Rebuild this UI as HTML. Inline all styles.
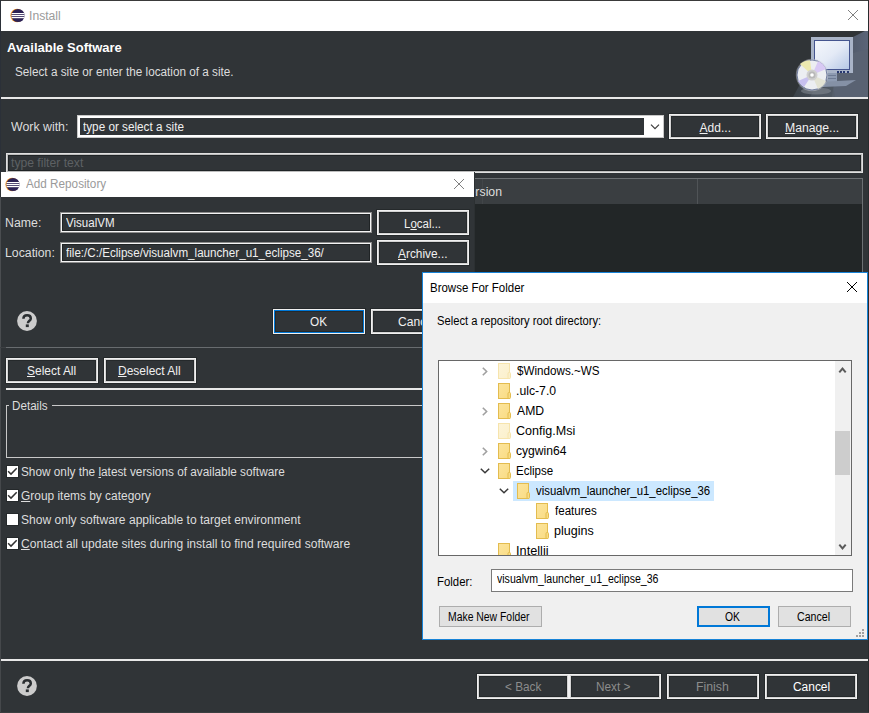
<!DOCTYPE html>
<html><head><meta charset="utf-8">
<style>
*{box-sizing:border-box;margin:0;padding:0}
html,body{width:869px;height:713px;overflow:hidden;background:#303437}
body{position:relative;font-family:"Liberation Sans",sans-serif;font-size:12px;color:#dddddd}
.a{position:absolute}
.t{position:absolute;white-space:nowrap;line-height:14px}
u{text-decoration:underline;text-underline-offset:1px}
</style></head><body>
<div class="a" style="left:0px;top:0px;width:869px;height:713px;background:#303437;"></div>
<div class="a" style="left:0px;top:0px;width:869px;height:1px;background:#3a3a3a;"></div>
<div class="a" style="left:0px;top:0px;width:1px;height:172px;background:#2b3038;"></div>
<div class="a" style="left:0px;top:172px;width:1px;height:541px;background:#45484b;"></div>
<div class="a" style="left:868px;top:0px;width:1px;height:713px;background:#282b2d;"></div>
<div class="a" style="left:0px;top:712px;width:869px;height:1px;background:#3b3e40;"></div>
<div class="a" style="left:1px;top:1px;width:867px;height:30px;background:#ffffff;"></div>
<svg class="a" style="left:10px;top:8px" width="16" height="15" viewBox="0 0 16 15">
  <circle cx="7.1" cy="7.5" r="6.7" fill="#f7941e"/>
  <circle cx="8" cy="7.5" r="6.6" fill="#2c2255"/>
  <g fill="#ffffff"><rect x="1.6" y="5" width="12.8" height="1.2"/><rect x="1.4" y="7" width="13.2" height="1.2"/><rect x="1.6" y="9" width="12.8" height="1.2"/></g>
</svg>
<div class="t" style="left:29.39px;top:9px;font-size:12px;color:#9a9a9a;transform:scaleX(1.0133);transform-origin:0 0">Install</div>
<svg class="a" style="left:848px;top:10px" width="10" height="10" fill="#808080"><rect x="0" y="0" width="1" height="1"/><rect x="9" y="0" width="1" height="1"/><rect x="1" y="1" width="1" height="1"/><rect x="8" y="1" width="1" height="1"/><rect x="2" y="2" width="1" height="1"/><rect x="7" y="2" width="1" height="1"/><rect x="3" y="3" width="1" height="1"/><rect x="6" y="3" width="1" height="1"/><rect x="4" y="4" width="1" height="1"/><rect x="5" y="4" width="1" height="1"/><rect x="5" y="5" width="1" height="1"/><rect x="4" y="5" width="1" height="1"/><rect x="6" y="6" width="1" height="1"/><rect x="3" y="6" width="1" height="1"/><rect x="7" y="7" width="1" height="1"/><rect x="2" y="7" width="1" height="1"/><rect x="8" y="8" width="1" height="1"/><rect x="1" y="8" width="1" height="1"/><rect x="9" y="9" width="1" height="1"/><rect x="0" y="9" width="1" height="1"/></svg>
<div class="t" style="left:7.20px;top:41px;font-size:13px;color:#ffffff;transform:scaleX(0.9974);transform-origin:0 0;font-weight:bold">Available Software</div>
<div class="t" style="left:14.72px;top:65px;font-size:12px;color:#dddddd;transform:scaleX(0.9784);transform-origin:0 0">Select a site or enter the location of a site.</div>
<svg class="a" style="left:790px;top:31px" width="78" height="66" viewBox="0 0 78 66">
<defs>
<linearGradient id="hbg" x1="0" y1="0" x2="1" y2="0"><stop offset="0" stop-color="#3b4249"/><stop offset="0.6" stop-color="#4b5360"/><stop offset="1" stop-color="#5a6478"/></linearGradient>
<linearGradient id="scr" x1="0" y1="0" x2="1" y2="1"><stop offset="0" stop-color="#f4f7fc"/><stop offset="0.5" stop-color="#e4eaf6"/><stop offset="1" stop-color="#b6c8e6"/></linearGradient>
<radialGradient id="dsk" cx="0.5" cy="0.5" r="0.5"><stop offset="0" stop-color="#d8d8d8"/><stop offset="1" stop-color="#f4f4f4"/></radialGradient>
</defs>
<polygon points="3,66 78,66 78,0 75,0 63,6 15,44" fill="url(#hbg)"/>
<polygon points="63,22 78,18 78,66 42,66 45,42 63,42" fill="#596272"/>
<polygon points="20,66 45,66 42,50 28,52" fill="#555d68" opacity="0.6"/>
<rect x="21" y="6" width="42" height="36" fill="#a9b4c8"/>
<rect x="24" y="9" width="36" height="30" fill="#45558f"/>
<rect x="25" y="10" width="34" height="28" fill="url(#scr)"/>
<rect x="47" y="40" width="2" height="2" fill="#283870"/><rect x="50" y="40" width="2" height="2" fill="#283870"/><rect x="53" y="40" width="2" height="2" fill="#283870"/><rect x="57" y="40" width="2" height="2" fill="#283870"/>
<rect x="37" y="42" width="10" height="9" fill="#8e9bb2"/><rect x="38" y="44" width="8" height="1" fill="#6f7c95"/><rect x="38" y="47" width="8" height="1" fill="#6f7c95"/>
<polygon points="30,51 66,49 56,55 32,56" fill="#8591a6"/>
<ellipse cx="26" cy="60" rx="15" ry="3.5" fill="#8a9098" opacity="0.5"/>
<circle cx="22" cy="44" r="16.2" fill="#c9ccd2" opacity="0.45"/><circle cx="22" cy="44" r="15" fill="#eceef2" stroke="#6a779c" stroke-width="0.9"/>
<path d="M22 44 L10 33 A15 15 0 0 1 20 29.2 Z" fill="#ece9b0"/>
<path d="M22 44 L28 30.3 A15 15 0 0 1 36 38 Z" fill="#d8c9f4"/>
<path d="M22 44 L8 50 A15 15 0 0 0 14 56 Z" fill="#c7c0ef"/>
<path d="M22 44 L36 50 A15 15 0 0 1 28 58 Z" fill="#e3e3d4"/>
<circle cx="22" cy="44" r="5.5" fill="#cfcfcf"/>
<circle cx="22" cy="44" r="3.5" fill="#b8b8b8"/>
<circle cx="22" cy="44" r="1.8" fill="#ffffff"/>
</svg>

<div class="a" style="left:1px;top:97px;width:867px;height:2px;background:#e8e8e8;"></div>
<div class="t" style="left:11.10px;top:120px;font-size:12px;color:#dddddd;transform:scaleX(1.0291);transform-origin:0 0">Work with:</div>
<div class="a" style="left:77px;top:115px;width:587px;height:23px;background:#ffffff;"></div>
<div class="a" style="left:77px;top:115px;width:587px;height:1px;background:#c8c8c8;"></div>
<div class="a" style="left:77px;top:137px;width:587px;height:1px;background:#c8c8c8;"></div>
<div class="a" style="left:77px;top:115px;width:1px;height:23px;background:#c8c8c8;"></div>
<div class="a" style="left:663px;top:115px;width:1px;height:23px;background:#c8c8c8;"></div>
<div class="a" style="left:80px;top:118px;width:564px;height:17px;background:#303437;"></div>
<div class="t" style="left:82.60px;top:120px;font-size:12px;color:#f0f0f0;transform:scaleX(0.9767);transform-origin:0 0">type or select a site</div>
<svg class="a" style="left:650px;top:124px" width="10" height="6" viewBox="0 0 10 6"><path d="M1 0.7L5 4.7L9 0.7" stroke="#3c3c3c" stroke-width="1.2" fill="none"/></svg>
<div class="a" style="left:668px;top:113px;width:94px;height:27px;background:#25292b"></div>
<div class="a" style="left:669px;top:114px;width:92px;height:25px;background:#f0f0f0"></div>
<div class="a" style="left:670px;top:115px;width:90px;height:23px;background:#d4d4d4"></div>
<div class="a" style="left:671px;top:116px;width:88px;height:21px;background:#25292b"></div>
<div class="a" style="left:672px;top:117px;width:86px;height:19px;background:#303437"></div>
<div class="t" style="left:699.60px;top:121px;font-size:12px;color:#f0f0f0;transform:scaleX(1.0000);transform-origin:0 0"><u>A</u>dd...</div>
<div class="a" style="left:765px;top:113px;width:94px;height:27px;background:#25292b"></div>
<div class="a" style="left:766px;top:114px;width:92px;height:25px;background:#f0f0f0"></div>
<div class="a" style="left:767px;top:115px;width:90px;height:23px;background:#d4d4d4"></div>
<div class="a" style="left:768px;top:116px;width:88px;height:21px;background:#25292b"></div>
<div class="a" style="left:769px;top:117px;width:86px;height:19px;background:#303437"></div>
<div class="t" style="left:785.08px;top:121px;font-size:12px;color:#f0f0f0;transform:scaleX(1.0157);transform-origin:0 0"><u>M</u>anage...</div>
<div class="a" style="left:6px;top:153px;width:857px;height:20px;background:#e0e0e0;"></div>
<div class="a" style="left:7px;top:154px;width:855px;height:18px;background:#bdbdbd;"></div>
<div class="a" style="left:8px;top:155px;width:853px;height:16px;background:#1f2325;"></div>
<div class="a" style="left:9px;top:156px;width:851px;height:14px;background:#303437;"></div>
<div class="t" style="left:11.00px;top:156px;font-size:12px;color:#5d6164;transform:scaleX(1.0127);transform-origin:0 0">type filter text</div>
<div class="a" style="left:6px;top:178px;width:857px;height:170px;background:#6c7073;"></div>
<div class="a" style="left:7px;top:179px;width:855px;height:25px;background:#3a3e41;"></div>
<div class="a" style="left:7px;top:204px;width:855px;height:143px;background:#222627;"></div>
<div class="a" style="left:697px;top:179px;width:1px;height:25px;background:#505457;"></div>
<div class="a" style="left:482px;top:179px;width:1px;height:25px;background:#424649;"></div>
<div class="t" style="left:461.00px;top:185px;font-size:12px;color:#dddddd;transform:scaleX(1.0256);transform-origin:0 0">Version</div>
<div class="a" style="left:5px;top:357px;width:94px;height:27px;background:#25292b"></div>
<div class="a" style="left:6px;top:358px;width:92px;height:25px;background:#f0f0f0"></div>
<div class="a" style="left:7px;top:359px;width:90px;height:23px;background:#d4d4d4"></div>
<div class="a" style="left:8px;top:360px;width:88px;height:21px;background:#25292b"></div>
<div class="a" style="left:9px;top:361px;width:86px;height:19px;background:#303437"></div>
<div class="t" style="left:27.30px;top:364px;font-size:12px;color:#f0f0f0;transform:scaleX(0.9958);transform-origin:0 0"><u>S</u>elect All</div>
<div class="a" style="left:103px;top:357px;width:94px;height:27px;background:#25292b"></div>
<div class="a" style="left:104px;top:358px;width:92px;height:25px;background:#f0f0f0"></div>
<div class="a" style="left:105px;top:359px;width:90px;height:23px;background:#d4d4d4"></div>
<div class="a" style="left:106px;top:360px;width:88px;height:21px;background:#25292b"></div>
<div class="a" style="left:107px;top:361px;width:86px;height:19px;background:#303437"></div>
<div class="t" style="left:118.10px;top:364px;font-size:12px;color:#f0f0f0;transform:scaleX(0.9984);transform-origin:0 0"><u>D</u>eselect All</div>
<div class="a" style="left:6px;top:388px;width:857px;height:2px;background:#e8e8e8;"></div>
<div class="a" style="left:6px;top:405px;width:3px;height:1px;background:#c8c8c8;"></div>
<div class="a" style="left:52px;top:405px;width:811px;height:1px;background:#c8c8c8;"></div>
<div class="a" style="left:6px;top:405px;width:1px;height:53px;background:#c8c8c8;"></div>
<div class="a" style="left:6px;top:457px;width:857px;height:1px;background:#c8c8c8;"></div>
<div class="a" style="left:862px;top:405px;width:1px;height:53px;background:#c8c8c8;"></div>
<div class="t" style="left:11.63px;top:399px;font-size:12px;color:#dddddd;transform:scaleX(0.9714);transform-origin:0 0">Details</div>
<div class="a" style="left:6px;top:465px;width:13px;height:13px;background:#25292b;"></div>
<div class="a" style="left:7px;top:466px;width:11px;height:11px;background:#ffffff;"></div>
<svg class="a" style="left:7px;top:466px" width="11" height="11" viewBox="0 0 11 11"><path d="M1.1 5.3L4 8.1L9.7 2.3" stroke="#333" stroke-width="1.5" fill="none"/></svg>
<div class="t" style="left:21.42px;top:465px;font-size:12px;color:#dddddd;transform:scaleX(0.9835);transform-origin:0 0">Show only the <u>l</u>atest versions of available software</div>
<div class="a" style="left:6px;top:489px;width:13px;height:13px;background:#25292b;"></div>
<div class="a" style="left:7px;top:490px;width:11px;height:11px;background:#ffffff;"></div>
<svg class="a" style="left:7px;top:490px" width="11" height="11" viewBox="0 0 11 11"><path d="M1.1 5.3L4 8.1L9.7 2.3" stroke="#333" stroke-width="1.5" fill="none"/></svg>
<div class="t" style="left:21.41px;top:489px;font-size:12px;color:#dddddd;transform:scaleX(0.9931);transform-origin:0 0"><u>G</u>roup items by category</div>
<div class="a" style="left:6px;top:513px;width:13px;height:13px;background:#25292b;"></div>
<div class="a" style="left:7px;top:514px;width:11px;height:11px;background:#ffffff;"></div>
<div class="t" style="left:21.39px;top:513px;font-size:12px;color:#dddddd;transform:scaleX(1.0051);transform-origin:0 0">Show only software applicable to target environment</div>
<div class="a" style="left:6px;top:537px;width:13px;height:13px;background:#25292b;"></div>
<div class="a" style="left:7px;top:538px;width:11px;height:11px;background:#ffffff;"></div>
<svg class="a" style="left:7px;top:538px" width="11" height="11" viewBox="0 0 11 11"><path d="M1.1 5.3L4 8.1L9.7 2.3" stroke="#333" stroke-width="1.5" fill="none"/></svg>
<div class="t" style="left:21.39px;top:537px;font-size:12px;color:#dddddd;transform:scaleX(1.0052);transform-origin:0 0"><u>C</u>ontact all update sites during install to find required software</div>
<div class="a" style="left:1px;top:659px;width:867px;height:2px;background:#e8e8e8;"></div>
<svg class="a" style="left:17px;top:676px" width="20" height="20" viewBox="0 0 20 20"><circle cx="10" cy="10" r="9.9" fill="#cccccc"/><path d="M6.4 7.8C6.4 5.3 8.1 4.3 10.1 4.3C12.3 4.3 13.8 5.6 13.8 7.4C13.8 9.7 10.9 9.9 10.9 12.3" stroke="#2a2e31" stroke-width="2.5" fill="none"/><rect x="8.8" y="13.4" width="3" height="2.7" fill="#2a2e31"/></svg>
<div class="a" style="left:476px;top:673px;width:186px;height:27px;background:#25292b;"></div>
<div class="a" style="left:477px;top:674px;width:92px;height:25px;background:#f0f0f0"></div>
<div class="a" style="left:478px;top:675px;width:90px;height:23px;background:#d4d4d4"></div>
<div class="a" style="left:479px;top:676px;width:88px;height:21px;background:#25292b"></div>
<div class="a" style="left:480px;top:677px;width:86px;height:19px;background:#303437"></div>
<div class="t" style="left:504.82px;top:680px;font-size:12px;color:#8c8c8c;transform:scaleX(0.9833);transform-origin:0 0">&lt; Back</div>
<div class="a" style="left:569px;top:674px;width:92px;height:25px;background:#f0f0f0"></div>
<div class="a" style="left:570px;top:675px;width:90px;height:23px;background:#d4d4d4"></div>
<div class="a" style="left:571px;top:676px;width:88px;height:21px;background:#25292b"></div>
<div class="a" style="left:572px;top:677px;width:86px;height:19px;background:#303437"></div>
<div class="t" style="left:596.21px;top:680px;font-size:12px;color:#8c8c8c;transform:scaleX(0.9853);transform-origin:0 0">Next &gt;</div>
<div class="a" style="left:666px;top:673px;width:94px;height:27px;background:#25292b"></div>
<div class="a" style="left:667px;top:674px;width:92px;height:25px;background:#f0f0f0"></div>
<div class="a" style="left:668px;top:675px;width:90px;height:23px;background:#d4d4d4"></div>
<div class="a" style="left:669px;top:676px;width:88px;height:21px;background:#25292b"></div>
<div class="a" style="left:670px;top:677px;width:86px;height:19px;background:#303437"></div>
<div class="t" style="left:696.28px;top:680px;font-size:12px;color:#8c8c8c;transform:scaleX(1.0233);transform-origin:0 0">Finish</div>
<div class="a" style="left:764px;top:673px;width:94px;height:27px;background:#25292b"></div>
<div class="a" style="left:765px;top:674px;width:92px;height:25px;background:#f0f0f0"></div>
<div class="a" style="left:766px;top:675px;width:90px;height:23px;background:#d4d4d4"></div>
<div class="a" style="left:767px;top:676px;width:88px;height:21px;background:#25292b"></div>
<div class="a" style="left:768px;top:677px;width:86px;height:19px;background:#303437"></div>
<div class="t" style="left:792.71px;top:680px;font-size:12px;color:#ffffff;transform:scaleX(0.9944);transform-origin:0 0">Cancel</div>
<div class="a" style="left:0px;top:172px;width:474px;height:176px;background:#303437;"></div>
<div class="a" style="left:0px;top:197px;width:1px;height:151px;background:#4a4d50;"></div>
<div class="a" style="left:474px;top:172px;width:1px;height:176px;background:#2c3032;"></div>
<div class="a" style="left:0px;top:347px;width:6px;height:1px;background:#3d4043;"></div>
<div class="a" style="left:6px;top:347px;width:468px;height:1px;background:#686c6f;"></div>
<div class="a" style="left:1px;top:172px;width:473px;height:25px;background:#ffffff;"></div>
<svg class="a" style="left:5px;top:177px" width="16" height="15" viewBox="0 0 16 15">
  <circle cx="7.1" cy="7.5" r="6.7" fill="#f7941e"/>
  <circle cx="8" cy="7.5" r="6.6" fill="#2c2255"/>
  <g fill="#ffffff"><rect x="1.6" y="5" width="12.8" height="1.2"/><rect x="1.4" y="7" width="13.2" height="1.2"/><rect x="1.6" y="9" width="12.8" height="1.2"/></g>
</svg>
<div class="t" style="left:25.60px;top:177px;font-size:12px;color:#9a9a9a;transform:scaleX(0.9768);transform-origin:0 0">Add Repository</div>
<svg class="a" style="left:454px;top:179px" width="10" height="10" fill="#808080"><rect x="0" y="0" width="1" height="1"/><rect x="9" y="0" width="1" height="1"/><rect x="1" y="1" width="1" height="1"/><rect x="8" y="1" width="1" height="1"/><rect x="2" y="2" width="1" height="1"/><rect x="7" y="2" width="1" height="1"/><rect x="3" y="3" width="1" height="1"/><rect x="6" y="3" width="1" height="1"/><rect x="4" y="4" width="1" height="1"/><rect x="5" y="4" width="1" height="1"/><rect x="5" y="5" width="1" height="1"/><rect x="4" y="5" width="1" height="1"/><rect x="6" y="6" width="1" height="1"/><rect x="3" y="6" width="1" height="1"/><rect x="7" y="7" width="1" height="1"/><rect x="2" y="7" width="1" height="1"/><rect x="8" y="8" width="1" height="1"/><rect x="1" y="8" width="1" height="1"/><rect x="9" y="9" width="1" height="1"/><rect x="0" y="9" width="1" height="1"/></svg>
<div class="t" style="left:5.37px;top:216px;font-size:12px;color:#dddddd;transform:scaleX(1.0273);transform-origin:0 0">Name:</div>
<div class="a" style="left:60px;top:212px;width:312px;height:21px;background:#8c8c8c;"></div>
<div class="a" style="left:61px;top:213px;width:310px;height:19px;background:#f4f4f4;"></div>
<div class="a" style="left:62px;top:214px;width:308px;height:17px;background:#1f2325;"></div>
<div class="a" style="left:63px;top:215px;width:306px;height:15px;background:#303437;"></div>
<div class="t" style="left:66.30px;top:216px;font-size:12px;color:#f0f0f0;transform:scaleX(0.9620);transform-origin:0 0">VisualVM</div>
<div class="a" style="left:376px;top:209px;width:94px;height:27px;background:#25292b"></div>
<div class="a" style="left:377px;top:210px;width:92px;height:25px;background:#f0f0f0"></div>
<div class="a" style="left:378px;top:211px;width:90px;height:23px;background:#d4d4d4"></div>
<div class="a" style="left:379px;top:212px;width:88px;height:21px;background:#25292b"></div>
<div class="a" style="left:380px;top:213px;width:86px;height:19px;background:#303437"></div>
<div class="t" style="left:403.64px;top:217px;font-size:12px;color:#f0f0f0;transform:scaleX(0.9568);transform-origin:0 0">L<u>o</u>cal...</div>
<div class="t" style="left:5.38px;top:246px;font-size:12px;color:#dddddd;transform:scaleX(1.0234);transform-origin:0 0">Location:</div>
<div class="a" style="left:60px;top:242px;width:312px;height:21px;background:#8c8c8c;"></div>
<div class="a" style="left:61px;top:243px;width:310px;height:19px;background:#f4f4f4;"></div>
<div class="a" style="left:62px;top:244px;width:308px;height:17px;background:#1f2325;"></div>
<div class="a" style="left:63px;top:245px;width:306px;height:15px;background:#303437;"></div>
<div class="t" style="left:66.30px;top:246px;font-size:12px;color:#f0f0f0;transform:scaleX(0.9688);transform-origin:0 0">file:/C:/Eclipse/visualvm_launcher_u1_eclipse_36/</div>
<div class="a" style="left:376px;top:239px;width:94px;height:27px;background:#25292b"></div>
<div class="a" style="left:377px;top:240px;width:92px;height:25px;background:#f0f0f0"></div>
<div class="a" style="left:378px;top:241px;width:90px;height:23px;background:#d4d4d4"></div>
<div class="a" style="left:379px;top:242px;width:88px;height:21px;background:#25292b"></div>
<div class="a" style="left:380px;top:243px;width:86px;height:19px;background:#303437"></div>
<div class="t" style="left:398.00px;top:247px;font-size:12px;color:#f0f0f0;transform:scaleX(0.9898);transform-origin:0 0"><u>A</u>rchive...</div>
<svg class="a" style="left:17px;top:311px" width="20" height="20" viewBox="0 0 20 20"><circle cx="10" cy="10" r="9.9" fill="#cccccc"/><path d="M6.4 7.8C6.4 5.3 8.1 4.3 10.1 4.3C12.3 4.3 13.8 5.6 13.8 7.4C13.8 9.7 10.9 9.9 10.9 12.3" stroke="#2a2e31" stroke-width="2.5" fill="none"/><rect x="8.8" y="13.4" width="3" height="2.7" fill="#2a2e31"/></svg>
<div class="a" style="left:272px;top:308px;width:94px;height:27px;background:#25292b"></div>
<div class="a" style="left:273px;top:309px;width:92px;height:25px;background:#f0f0f0"></div>
<div class="a" style="left:274px;top:310px;width:90px;height:23px;background:#0078d7"></div>
<div class="a" style="left:275px;top:311px;width:88px;height:21px;background:#25292b"></div>
<div class="a" style="left:276px;top:312px;width:86px;height:19px;background:#303437"></div>
<div class="t" style="left:310.42px;top:315px;font-size:12px;color:#f0f0f0;transform:scaleX(0.9813);transform-origin:0 0">OK</div>
<div class="a" style="left:370px;top:308px;width:94px;height:27px;background:#25292b"></div>
<div class="a" style="left:371px;top:309px;width:92px;height:25px;background:#f0f0f0"></div>
<div class="a" style="left:372px;top:310px;width:90px;height:23px;background:#d4d4d4"></div>
<div class="a" style="left:373px;top:311px;width:88px;height:21px;background:#25292b"></div>
<div class="a" style="left:374px;top:312px;width:86px;height:19px;background:#303437"></div>
<div class="t" style="left:398.29px;top:315px;font-size:12px;color:#f0f0f0;transform:scaleX(1.0056);transform-origin:0 0">Cancel</div>
<div class="a" style="left:422px;top:272px;width:446px;height:368px;background:#1883d7;"></div>
<div class="a" style="left:423px;top:273px;width:444px;height:366px;background:#f0f0f0;"></div>
<div class="a" style="left:423px;top:273px;width:444px;height:30px;background:#ffffff;"></div>
<div class="t" style="left:430.44px;top:281px;font-size:12px;color:#000000;transform:scaleX(0.9561);transform-origin:0 0">Browse For Folder</div>
<svg class="a" style="left:847px;top:282px" width="10" height="10" fill="#000000"><rect x="0" y="0" width="1" height="1"/><rect x="9" y="0" width="1" height="1"/><rect x="1" y="1" width="1" height="1"/><rect x="8" y="1" width="1" height="1"/><rect x="2" y="2" width="1" height="1"/><rect x="7" y="2" width="1" height="1"/><rect x="3" y="3" width="1" height="1"/><rect x="6" y="3" width="1" height="1"/><rect x="4" y="4" width="1" height="1"/><rect x="5" y="4" width="1" height="1"/><rect x="5" y="5" width="1" height="1"/><rect x="4" y="5" width="1" height="1"/><rect x="6" y="6" width="1" height="1"/><rect x="3" y="6" width="1" height="1"/><rect x="7" y="7" width="1" height="1"/><rect x="2" y="7" width="1" height="1"/><rect x="8" y="8" width="1" height="1"/><rect x="1" y="8" width="1" height="1"/><rect x="9" y="9" width="1" height="1"/><rect x="0" y="9" width="1" height="1"/></svg>
<div class="t" style="left:436.77px;top:314px;font-size:12px;color:#000000;transform:scaleX(0.9322);transform-origin:0 0">Select a repository root directory:</div>
<div class="a" style="left:438px;top:360px;width:414px;height:196px;background:#676767;"></div>
<div class="a" style="left:439px;top:361px;width:412px;height:194px;background:#ffffff;"></div>
<div class="a" style="left:439px;top:361px;width:396px;height:194px;overflow:hidden">
<svg class="a" style="left:43px;top:6px" width="6" height="9" viewBox="0 0 6 9"><path d="M0.8 0.8L4.6 4.5L0.8 8.2" stroke="#a0a0a0" stroke-width="1.6" fill="none"/></svg>
<svg class="a" style="left:59px;top:2px" width="13" height="16" viewBox="0 0 13 16"><defs><linearGradient id="g0" x1="0" y1="0" x2="1" y2="1"><stop offset="0" stop-color="#fdf4d8"/><stop offset="1" stop-color="#fbf0cc"/></linearGradient></defs><rect x="0.5" y="0.5" width="11" height="15" fill="url(#g0)" stroke="#f6e4ad"/><rect x="10" y="9.5" width="2.5" height="6" rx="1" fill="#fbf0cc" stroke="#f6e4ad"/></svg>
<div class="t" style="left:78.30px;top:3px;font-size:12px;color:#000000;transform:scaleX(0.9706);transform-origin:0 0">$Windows.~WS</div>
<svg class="a" style="left:59px;top:22px" width="13" height="16" viewBox="0 0 13 16"><defs><linearGradient id="g1" x1="0" y1="0" x2="1" y2="1"><stop offset="0" stop-color="#fce49c"/><stop offset="1" stop-color="#f9dc84"/></linearGradient></defs><rect x="0.5" y="0.5" width="11" height="15" fill="url(#g1)" stroke="#e3bc4f"/><rect x="10" y="9.5" width="2.5" height="6" rx="1" fill="#f9dc84" stroke="#e3bc4f"/></svg>
<div class="t" style="left:77.28px;top:23px;font-size:12px;color:#000000;transform:scaleX(1.0184);transform-origin:0 0">.ulc-7.0</div>
<svg class="a" style="left:43px;top:46px" width="6" height="9" viewBox="0 0 6 9"><path d="M0.8 0.8L4.6 4.5L0.8 8.2" stroke="#a0a0a0" stroke-width="1.6" fill="none"/></svg>
<svg class="a" style="left:59px;top:42px" width="13" height="16" viewBox="0 0 13 16"><defs><linearGradient id="g2" x1="0" y1="0" x2="1" y2="1"><stop offset="0" stop-color="#fce49c"/><stop offset="1" stop-color="#f9dc84"/></linearGradient></defs><rect x="0.5" y="0.5" width="11" height="15" fill="url(#g2)" stroke="#e3bc4f"/><rect x="10" y="9.5" width="2.5" height="6" rx="1" fill="#f9dc84" stroke="#e3bc4f"/></svg>
<div class="t" style="left:78.30px;top:43px;font-size:12px;color:#000000;transform:scaleX(1.0154);transform-origin:0 0">AMD</div>
<svg class="a" style="left:59px;top:62px" width="13" height="16" viewBox="0 0 13 16"><defs><linearGradient id="g3" x1="0" y1="0" x2="1" y2="1"><stop offset="0" stop-color="#fdf4d8"/><stop offset="1" stop-color="#fbf0cc"/></linearGradient></defs><rect x="0.5" y="0.5" width="11" height="15" fill="url(#g3)" stroke="#f6e4ad"/><rect x="10" y="9.5" width="2.5" height="6" rx="1" fill="#fbf0cc" stroke="#f6e4ad"/></svg>
<div class="t" style="left:77.25px;top:63px;font-size:12px;color:#000000;transform:scaleX(1.0455);transform-origin:0 0">Config.Msi</div>
<svg class="a" style="left:43px;top:86px" width="6" height="9" viewBox="0 0 6 9"><path d="M0.8 0.8L4.6 4.5L0.8 8.2" stroke="#a0a0a0" stroke-width="1.6" fill="none"/></svg>
<svg class="a" style="left:59px;top:82px" width="13" height="16" viewBox="0 0 13 16"><defs><linearGradient id="g4" x1="0" y1="0" x2="1" y2="1"><stop offset="0" stop-color="#fce49c"/><stop offset="1" stop-color="#f9dc84"/></linearGradient></defs><rect x="0.5" y="0.5" width="11" height="15" fill="url(#g4)" stroke="#e3bc4f"/><rect x="10" y="9.5" width="2.5" height="6" rx="1" fill="#f9dc84" stroke="#e3bc4f"/></svg>
<div class="t" style="left:77.29px;top:83px;font-size:12px;color:#000000;transform:scaleX(1.0102);transform-origin:0 0">cygwin64</div>
<svg class="a" style="left:41px;top:107px" width="10" height="6" viewBox="0 0 10 6"><path d="M0.8 0.8L5 4.8L9.2 0.8" stroke="#3a3a3a" stroke-width="1.5" fill="none"/></svg>
<svg class="a" style="left:59px;top:102px" width="13" height="16" viewBox="0 0 13 16"><defs><linearGradient id="g5" x1="0" y1="0" x2="1" y2="1"><stop offset="0" stop-color="#fce49c"/><stop offset="1" stop-color="#f9dc84"/></linearGradient></defs><rect x="0.5" y="0.5" width="11" height="15" fill="url(#g5)" stroke="#e3bc4f"/><rect x="10" y="9.5" width="2.5" height="6" rx="1" fill="#f9dc84" stroke="#e3bc4f"/></svg>
<div class="t" style="left:77.34px;top:103px;font-size:12px;color:#000000;transform:scaleX(0.9595);transform-origin:0 0">Eclipse</div>
<div class="a" style="left:74px;top:120px;width:201px;height:20px;background:#cce8ff;"></div>
<svg class="a" style="left:60px;top:127px" width="10" height="6" viewBox="0 0 10 6"><path d="M0.8 0.8L5 4.8L9.2 0.8" stroke="#3a3a3a" stroke-width="1.5" fill="none"/></svg>
<svg class="a" style="left:78px;top:122px" width="13" height="16" viewBox="0 0 13 16"><defs><linearGradient id="g6" x1="0" y1="0" x2="1" y2="1"><stop offset="0" stop-color="#fce49c"/><stop offset="1" stop-color="#f9dc84"/></linearGradient></defs><rect x="0.5" y="0.5" width="11" height="15" fill="url(#g6)" stroke="#e3bc4f"/><rect x="10" y="9.5" width="2.5" height="6" rx="1" fill="#f9dc84" stroke="#e3bc4f"/></svg>
<div class="t" style="left:97.30px;top:123px;font-size:12px;color:#000000;transform:scaleX(0.9492);transform-origin:0 0">visualvm_launcher_u1_eclipse_36</div>
<svg class="a" style="left:97px;top:142px" width="13" height="16" viewBox="0 0 13 16"><defs><linearGradient id="g7" x1="0" y1="0" x2="1" y2="1"><stop offset="0" stop-color="#fce49c"/><stop offset="1" stop-color="#f9dc84"/></linearGradient></defs><rect x="0.5" y="0.5" width="11" height="15" fill="url(#g7)" stroke="#e3bc4f"/><rect x="10" y="9.5" width="2.5" height="6" rx="1" fill="#f9dc84" stroke="#e3bc4f"/></svg>
<div class="t" style="left:116.30px;top:143px;font-size:12px;color:#000000;transform:scaleX(0.9628);transform-origin:0 0">features</div>
<svg class="a" style="left:97px;top:162px" width="13" height="16" viewBox="0 0 13 16"><defs><linearGradient id="g8" x1="0" y1="0" x2="1" y2="1"><stop offset="0" stop-color="#fce49c"/><stop offset="1" stop-color="#f9dc84"/></linearGradient></defs><rect x="0.5" y="0.5" width="11" height="15" fill="url(#g8)" stroke="#e3bc4f"/><rect x="10" y="9.5" width="2.5" height="6" rx="1" fill="#f9dc84" stroke="#e3bc4f"/></svg>
<div class="t" style="left:115.26px;top:163px;font-size:12px;color:#000000;transform:scaleX(1.0432);transform-origin:0 0">plugins</div>
<svg class="a" style="left:59px;top:182px" width="13" height="16" viewBox="0 0 13 16"><defs><linearGradient id="g9" x1="0" y1="0" x2="1" y2="1"><stop offset="0" stop-color="#fce49c"/><stop offset="1" stop-color="#f9dc84"/></linearGradient></defs><rect x="0.5" y="0.5" width="11" height="15" fill="url(#g9)" stroke="#e3bc4f"/><rect x="10" y="9.5" width="2.5" height="6" rx="1" fill="#f9dc84" stroke="#e3bc4f"/></svg>
<div class="t" style="left:77.24px;top:183px;font-size:12px;color:#000000;transform:scaleX(1.0621);transform-origin:0 0">Intellij</div>
</div>
<div class="a" style="left:835px;top:361px;width:16px;height:194px;background:#f0f0f0;"></div>
<div class="a" style="left:835px;top:431px;width:15px;height:44px;background:#cdcdcd;"></div>
<svg class="a" style="left:838px;top:366px" width="9" height="8" viewBox="0 0 9 8"><path d="M1.3 6.3L4.5 2.6L7.7 6.3" stroke="#5a5a5a" stroke-width="2" fill="none"/></svg>
<svg class="a" style="left:838px;top:543px" width="9" height="8" viewBox="0 0 9 8"><path d="M1.3 1.7L4.5 5.4L7.7 1.7" stroke="#5a5a5a" stroke-width="2" fill="none"/></svg>
<div class="t" style="left:436.75px;top:575px;font-size:12px;color:#000000;transform:scaleX(0.9486);transform-origin:0 0">Folder:</div>
<div class="a" style="left:491px;top:569px;width:362px;height:23px;background:#7a7a7a;"></div>
<div class="a" style="left:492px;top:570px;width:360px;height:21px;background:#ffffff;"></div>
<div class="t" style="left:496.80px;top:572px;font-size:12px;color:#000000;transform:scaleX(0.8798);transform-origin:0 0">visualvm_launcher_u1_eclipse_36</div>
<div class="a" style="left:439px;top:606px;width:103px;height:21px;background:#adadad;"></div>
<div class="a" style="left:440px;top:607px;width:101px;height:19px;background:#e1e1e1;"></div>
<div class="t" style="left:447.93px;top:610px;font-size:12px;color:#000000;transform:scaleX(0.8667);transform-origin:0 0">Make New Folder</div>
<div class="a" style="left:697px;top:606px;width:73px;height:21px;background:#0078d7;"></div>
<div class="a" style="left:699px;top:608px;width:69px;height:17px;background:#e1e1e1;"></div>
<div class="t" style="left:724.54px;top:610px;font-size:12px;color:#000000;transform:scaleX(0.8625);transform-origin:0 0">OK</div>
<div class="a" style="left:778px;top:606px;width:73px;height:21px;background:#adadad;"></div>
<div class="a" style="left:779px;top:607px;width:71px;height:19px;background:#e1e1e1;"></div>
<div class="t" style="left:796.72px;top:610px;font-size:12px;color:#000000;transform:scaleX(0.8833);transform-origin:0 0">Cancel</div>
<svg class="a" style="left:856px;top:629px" width="9" height="9" fill="#a0a0a0"><rect x="6" y="0" width="2" height="2"/><rect x="3" y="3" width="2" height="2"/><rect x="6" y="3" width="2" height="2"/><rect x="0" y="6" width="2" height="2"/><rect x="3" y="6" width="2" height="2"/><rect x="6" y="6" width="2" height="2"/></svg>
</body></html>
